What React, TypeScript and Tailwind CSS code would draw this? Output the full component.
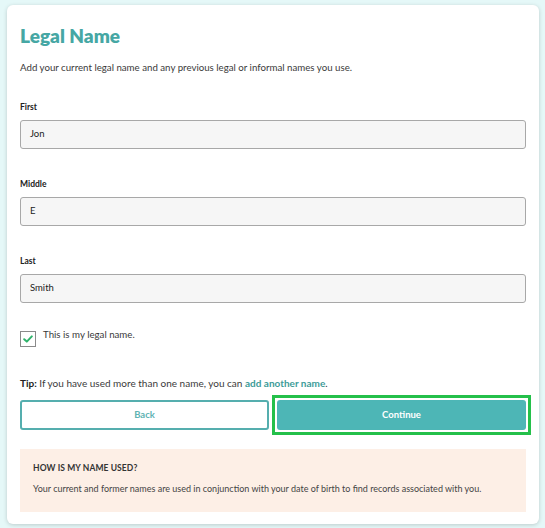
import React from "react";

export default function App() {
  return (
    <div className="min-h-[528px] w-[545px] bg-[#e5f8f8] pt-[5px] pl-[7px]" style={{ fontFamily: "Lato, 'Noto Sans', sans-serif" }}>
      <div className="w-[532px] h-[519px] rounded-[6px] bg-white shadow-[0_1px_4px_rgba(0,0,0,0.18)] px-[13px] pt-[19px]">
        <h1 className="text-[19px] font-extrabold text-[#46a7a4] leading-[24px]">Legal Name</h1>
        <p className="mt-[13px] text-[9.7px] text-[#3a3a3a] leading-[12px]">
          Add your current legal name and any previous legal or informal names you use.
        </p>

        <div className="mt-[29px]">
          <Field label="First" value="Jon" />
        </div>
        <div className="mt-[30px]">
          <Field label="Middle" value="E" />
        </div>
        <div className="mt-[30px]">
          <Field label="Last" value="Smith" />
        </div>

        <div className="mt-[27px] flex items-start">
          <div className="w-[16px] h-[16px] border border-[#8a8a8a] bg-white flex items-center justify-center mt-[1px]">
            <svg width="10" height="8" viewBox="0 0 10 8">
              <path d="M1.2 4.2 L3.8 6.6 L8.8 1.4" fill="none" stroke="#2fb36b" strokeWidth="2" strokeLinecap="round" strokeLinejoin="round" />
            </svg>
          </div>
          <span className="ml-[7px] text-[9.7px] text-[#3a3a3a] leading-[12px] -mt-[2px]">This is my legal name.</span>
        </div>

        <p className="mt-[30px] text-[10px] text-[#3a3a3a] leading-[12px]">
          <span className="font-bold text-[#222]">Tip:</span> If you have used more than one name, you can{" "}
          <span className="font-bold text-[#3d9c99]">add another name</span>.
        </p>

        <div className="mt-[11px] grid grid-cols-2 gap-[8px]">
          <button className="h-[30px] rounded-[3px] border-2 border-[#55aeae] bg-white text-[9.5px] font-bold text-[#5fb3b3]">
            Back
          </button>
          <button className="relative h-[30px] rounded-[3px] bg-[#4db6b6] text-[9.5px] font-bold text-white">
            Continue
            <span className="absolute -inset-[5px] border-[3px] border-[#24c04a] pointer-events-none" />
          </button>
        </div>

        <div className="mt-[19px] bg-[#fdefe6] px-[13px] pt-[14px] pb-[18px]">
          <div className="text-[8.5px] font-bold text-[#333] leading-[11px] tracking-[0.1px]">HOW IS MY NAME USED?</div>
          <p className="mt-[9px] text-[9px] text-[#444] leading-[11px]">
            Your current and former names are used in conjunction with your date of birth to find records associated with you.
          </p>
        </div>
      </div>
    </div>
  );
}

function Field({ label, value }: { label: string; value: string }) {
  return (
    <div>
      <div className="text-[8.5px] font-bold text-[#222] leading-[11px]">{label}</div>
      <div className="mt-[7px] h-[29px] rounded-[3px] border border-[#a8a8a8] bg-[#f6f6f6] flex items-center px-[9px] text-[9.5px] text-[#222]">
        {value}
      </div>
    </div>
  );
}
